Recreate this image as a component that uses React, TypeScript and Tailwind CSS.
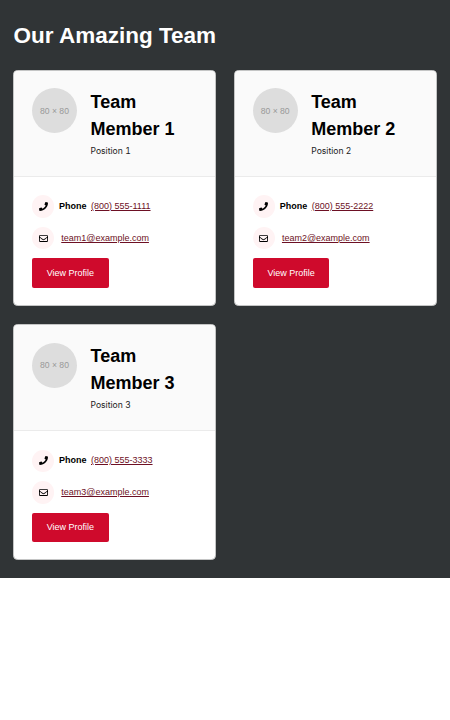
import { FaPhone, FaRegEnvelope } from 'react-icons/fa';

const members = [
  { name: 'Team Member 1', position: 'Position 1', phone: '(800) 555-1111', email: 'team1@example.com' },
  { name: 'Team Member 2', position: 'Position 2', phone: '(800) 555-2222', email: 'team2@example.com' },
  { name: 'Team Member 3', position: 'Position 3', phone: '(800) 555-3333', email: 'team3@example.com' },
];

type Member = (typeof members)[number];

function TeamCard({ member }: { member: Member }) {
  return (
    <article className="h-[236.25px] overflow-hidden rounded-[4.5px] border border-[#c4c5c5] bg-white">
      <header className="flex h-[106.2px] gap-[13.5px] border-b border-[#ebebeb] bg-[#fafafa] px-[17.7px] pt-[17.5px]">
        <div className="flex size-[45px] shrink-0 items-center justify-center rounded-full bg-[#dddddd] pt-px text-[8.6px] text-[#999999]">
          80 × 80
        </div>
        <div className="min-w-0 flex-1 pt-[0.75px]">
          <h2 className="text-[18px] leading-[27px] font-bold text-black">{member.name}</h2>
          <p className="mt-[1.5px] font-['Inter',sans-serif] text-[8.6px] leading-[13.5px] text-[#212121] tabular-nums">{member.position}</p>
        </div>
      </header>
      <div className="px-[17.7px] pt-[18.4px]">
        <div className="flex h-[22.5px] items-center">
          <span className="mr-[4.5px] flex size-[22.5px] items-center justify-center rounded-full bg-[#fff3f4] text-[9px] text-black">
            <FaPhone />
          </span>
          <strong className="mr-[4.5px]">Phone</strong>
          <a href="#" className="text-[#6d1024] underline">{member.phone}</a>
        </div>
        <div className="mt-[9px] flex h-[22.5px] items-center">
          <span className="mr-[6.75px] flex size-[22.5px] items-center justify-center rounded-full bg-[#fff3f4] text-[9px] text-black">
            <FaRegEnvelope />
          </span>
          <a href="#" className="pt-px text-[#6d1024] underline">{member.email}</a>
        </div>
        <button className="mt-[9px] h-[29.25px] w-[76.8px] rounded-[2px] bg-[#cf0a2c] pt-px text-[9px] text-white">
          View Profile
        </button>
      </div>
    </article>
  );
}

export default function App() {
  return (
    <section className="h-[578px] bg-[#303436] px-[13.3px] pt-[19px] font-['Liberation_Sans',Arial,sans-serif] text-[9px] leading-[13.5px] text-black">
      <h1 className="pl-[0.2px] text-[22.5px] leading-[33.75px] font-bold text-white">Our Amazing Team</h1>
      <div className="mt-[17px] grid grid-cols-2 gap-[18px]">
        {members.map((member) => (
          <TeamCard key={member.email} member={member} />
        ))}
      </div>
    </section>
  );
}
